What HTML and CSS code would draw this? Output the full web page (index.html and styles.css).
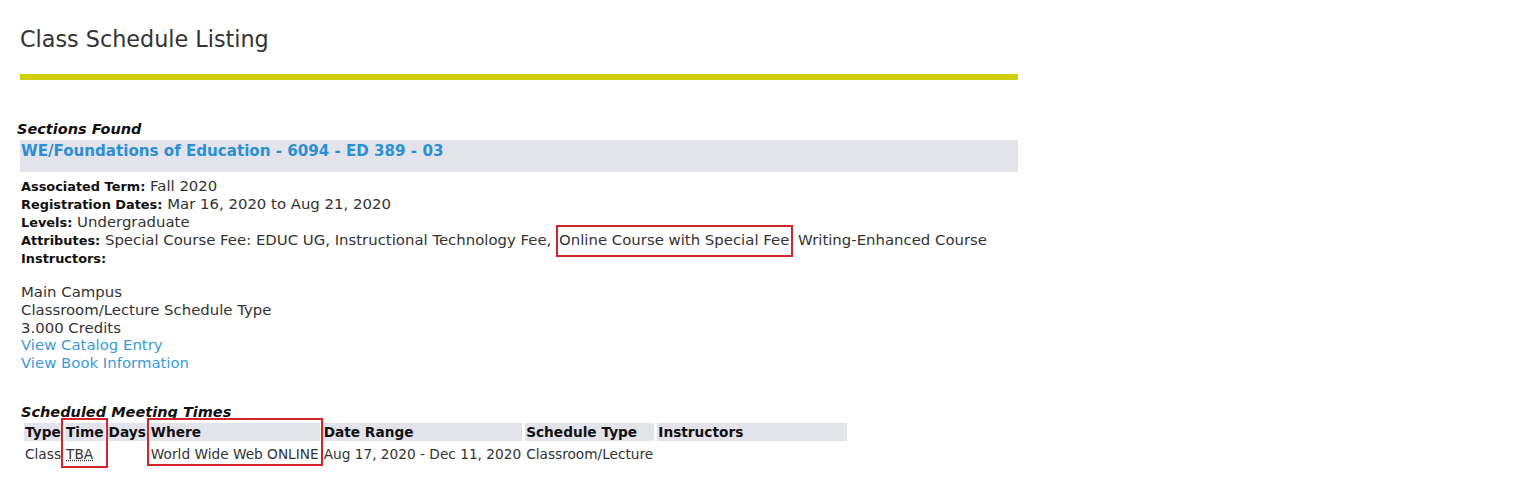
FILE: index.html
```html
<!DOCTYPE html>
<html lang="en">
<head>
    <meta charset="UTF-8">
    <title>Class Schedule Listing</title>
    <link rel="stylesheet" href="styles.css">
</head>
<body>
    <div class="page">
        <h1 class="page-title">Class Schedule Listing</h1>
        <div class="title-rule"></div>

        <div class="caption">Sections Found</div>
        <div class="section-head">
            <a href="#">WE/Foundations of Education - 6094 - ED 389 - 03</a>
        </div>

        <div class="details">
            <div><span class="label">Associated Term:</span> Fall 2020</div>
            <div><span class="label">Registration Dates:</span> Mar 16, 2020 to Aug 21, 2020</div>
            <div><span class="label">Levels:</span> Undergraduate</div>
            <div><span class="label">Attributes:</span> Special Course Fee: EDUC UG, Instructional Technology Fee, <span class="marked">Online Course with Special Fee</span> Writing-Enhanced Course</div>
            <div><span class="label">Instructors:</span></div>
            <div class="blank">&nbsp;</div>
            <div class="plain">Main Campus</div>
            <div class="plain">Classroom/Lecture Schedule Type</div>
            <div class="plain">3.000 Credits</div>
            <div class="plain"><a href="#">View Catalog Entry</a></div>
            <div class="plain"><a href="#">View Book Information</a></div>
        </div>

        <div class="caption caption-meet">Scheduled Meeting Times</div>
        <table class="meet">
            <tr>
                <th class="c-type">Type</th>
                <th class="c-time marked-col">Time</th>
                <th class="c-days">Days</th>
                <th class="c-where marked-col">Where</th>
                <th class="c-range">Date Range</th>
                <th class="c-sched">Schedule Type</th>
                <th class="c-inst">Instructors</th>
            </tr>
            <tr>
                <td>Class</td>
                <td><abbr title="To Be Announced">TBA</abbr></td>
                <td></td>
                <td>World Wide Web ONLINE</td>
                <td>Aug 17, 2020 - Dec 11, 2020</td>
                <td>Classroom/Lecture</td>
                <td></td>
            </tr>
        </table>
    </div>
</body>
</html>
```

FILE: styles.css
```css
/* General */
body {
    margin: 0;
    background-color: #fff;
    color: #333;
    font-family: "DejaVu Sans", Verdana, sans-serif;
}

a {
    color: #2b8fd3;
    text-decoration: none;
}

.page {
    width: 998px;
    padding: 0 0 20px 20px;
}

/* Title */
.page-title {
    margin: 0;
    padding-top: 26px;
    font-size: 22.3px;
    font-weight: normal;
    line-height: 26px;
    color: #333;
}

.title-rule {
    height: 6px;
    margin-top: 22px;
    background-color: #cfcf0c;
}

/* Section captions */
.caption {
    margin: 40px 0 0 -3px;
    font-size: 14.5px;
    line-height: 18px;
    font-weight: bold;
    font-style: italic;
    color: #111;
}

.section-head {
    height: 32px;
    margin-top: 2px;
    padding: 1px 0 0 1px;
    box-sizing: border-box;
    background-color: #e3e3ec;
}

.section-head a {
    font-size: 15.1px;
    font-weight: bold;
    line-height: 20px;
}

/* Details block */
.details {
    margin-top: 5px;
    padding-left: 1px;
    font-size: 14.9px;
    line-height: 18px;
}

.details .label {
    font-size: 12.9px;
    line-height: 12px;
    font-weight: bold;
    color: #111;
}

.details .blank {
    line-height: 17px;
}

.details .plain {
    line-height: 17.8px;
}

.details a {
    color: #3a9ad8;
}

.marked {
    border: 2px solid #d3232b;
    padding: 4px 2px 6px 1px;
}

/* Meeting times */
.caption-meet {
    margin: 30px 0 0 1px;
}

.meet {
    border-spacing: 3px 0;
    margin-left: 1px;
    margin-top: 2px;
    font-size: 13.7px;
}

.meet th {
    position: relative;
    background-color: #e3e3ec;
    color: #111;
    font-size: 13.7px;
    text-align: left;
    padding: 0 1px;
    line-height: 18px;
}

.meet td {
    padding: 4px 1px 0;
    line-height: 18px;
    color: #333;
    white-space: nowrap;
}

.meet abbr {
    text-decoration: underline dotted;
}

.meet .c-inst {
    width: 188px;
}

/* Red annotation boxes drawn over the marked columns */
.marked-col::after {
    content: "";
    position: absolute;
    top: -5px;
    left: -4px;
    right: -3px;
    height: 50px;
    border: 2px solid #d3232b;
    box-sizing: border-box;
}

.c-where::after {
    left: -3px;
    height: 48px;
}
```
